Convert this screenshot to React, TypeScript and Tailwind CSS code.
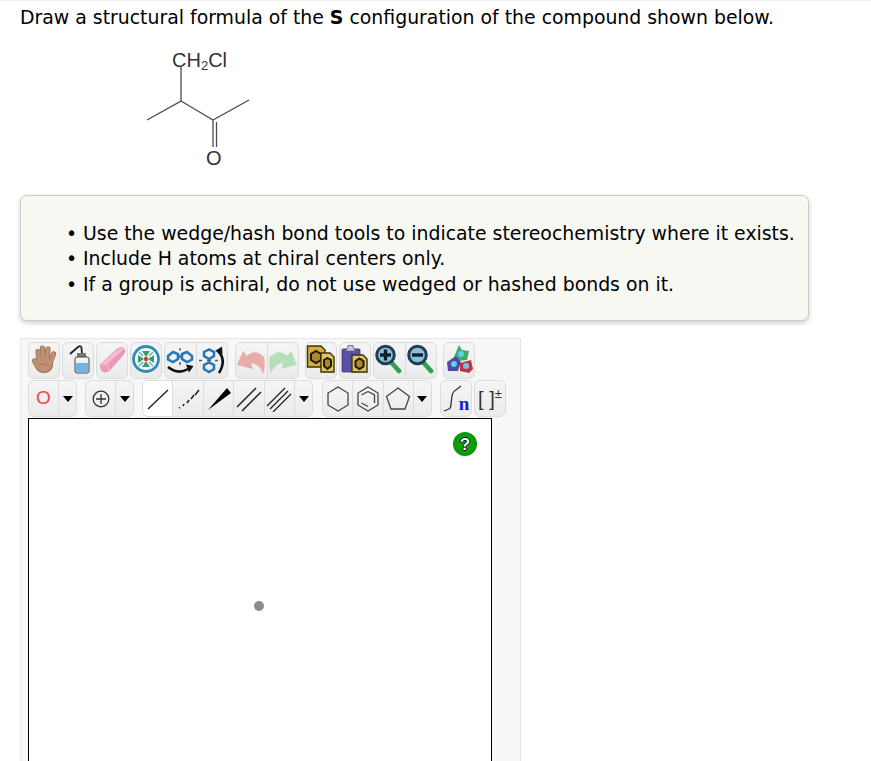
import React from 'react';

// every toolbar icon is drawn on the 30x35 inner face of a button
const Face = ({ children }: { children: React.ReactNode }) => (
  <svg width="30" height="35" viewBox="0 0 30 35" fill="none" className="blur-[0.35px] shrink-0">
    {children}
  </svg>
);

const Hand = () => (
  <Face>
    <g stroke="#8f6a52" strokeWidth="5.200" strokeLinecap="round">
      <path d="M10 18 L9 8.500 M14 16 L13.500 5 M18 16 L19 6 M21.500 19 L24.500 11 M9 24 L5.500 18" />
    </g>
    <ellipse cx="15" cy="22" rx="9" ry="8" fill="#8f6a52" />
    <g stroke="#c09070" strokeWidth="4" strokeLinecap="round">
      <path d="M10 18 L9 8.500 M14 16 L13.500 5 M18 16 L19 6 M21.500 19 L24.500 11 M9 24 L5.500 18" />
    </g>
    <ellipse cx="15" cy="22" rx="8" ry="7" fill="#c09070" />
    <path d="M10 22 Q15 19 20 24" stroke="#9c7258" strokeWidth="1" />
  </Face>
);

const Bottle = () => (
  <Face>
    <path d="M7 11 L15 4 Q18 2 18.500 5 L19 11" stroke="#222" strokeWidth="1.800" />
    <rect x="14" y="10" width="9" height="5" fill="#777777" />
    <rect x="12" y="14" width="14" height="16" rx="2" fill="#eef2f5" stroke="#444" strokeWidth="1" />
    <rect x="13" y="20" width="12" height="9.500" fill="#6fb6e4" />
  </Face>
);

const Eraser = () => (
  <Face>
    <path d="M3 22 L20 6 Q25 3 27.500 6 Q29 9 26 12 L12 28 Q7 30 5 28 Z" fill="#ee95bb" stroke="#d889ab" strokeWidth="0.600" />
    <path d="M4 21 L20 7 Q24 4 27 6 L10 21 L5 22 Z" fill="#f7b9d3" />
    <path d="M5 22 L10 21 L12 28" stroke="#f9c9dd" strokeWidth="0.900" />
  </Face>
);

const Wheel = () => (
  <Face>
    <circle cx="15" cy="16" r="12.500" fill="#f1f7fa" stroke="#2f8db5" strokeWidth="2.800" />
    <g fill="#3e9a62">
      <path d="M15 14 L11 8 L19 8 Z" />
      <path d="M15 18 L11 24 L19 24 Z" />
      <path d="M13 16 L7 12 L7 20 Z" />
      <path d="M17 16 L23 12 L23 20 Z" />
    </g>
    <path d="M8 9 L12 13 M22 9 L18 13 M8 23 L12 19 M22 23 L18 19" stroke="#52a8c8" strokeWidth="1.200" />
    <circle cx="15" cy="16" r="2.200" fill="#dc3a32" />
  </Face>
);

const FlipH = () => (
  <Face>
    <path d="M3 13 L8 9 L13 11 L13 16 L8 19 L3 16.500 Z" stroke="#1f78bd" strokeWidth="2.500" />
    <path d="M17 11 L22 9 L27 13 L27 16.500 L22 19 L17 16 Z" stroke="#1f78bd" strokeWidth="2.500" />
    <path d="M15 5 L15 7.500 M15 12 L15 15 M15 19 L15 22" stroke="#555" strokeWidth="1.400" />
    <path d="M3 24 Q13 32 23 26" stroke="#111" strokeWidth="2.600" />
    <path d="M21 21.500 L28.500 23 L24 29.500 Z" fill="#111" />
  </Face>
);

const FlipV = () => (
  <Face>
    <path d="M7 9 L12 6.500 L17 9 L17 13 L12 16 L7 13 Z" stroke="#1f78bd" strokeWidth="2.500" />
    <path d="M7 22 L12 19.500 L17 22 L17 26 L12 29 L7 26 Z" stroke="#1f78bd" strokeWidth="2.500" />
    <path d="M2 17.500 L5 17.500 M10 17.500 L14 17.500 M18 17.500 L21 17.500" stroke="#555" strokeWidth="1.400" />
    <path d="M21 8 Q30 17 22 30" stroke="#111" strokeWidth="2.600" />
    <path d="M18 8 L25 3.500 L25.500 11 Z" fill="#111" />
  </Face>
);

const Undo = () => (
  <Face>
    <path d="M1 22 L7 8 L11 13 Q19 5 28 14 Q30 22 27 31 Q24 21 15 20 L17 26 Z" fill="#e9acac" />
  </Face>
);

const Redo = () => (
  <Face>
    <path d="M29 22 L23 8 L19 13 Q11 5 2 14 Q0 22 3 31 Q6 21 15 20 L13 26 Z" fill="#b3e0b9" />
  </Face>
);

const Copy = () => (
  <Face>
    <path d="M1.500 3 L15 3 L19 7 L19 24 L1.500 24 Z" fill="#d3ae3c" stroke="#3a3010" strokeWidth="1.400" />
    <path d="M10 8 L15 11 L15 17 L10 20 L5 17 L5 11 Z" fill="#a98a2c" stroke="#1c1a10" strokeWidth="2" />
    <path d="M15 10 L24 10 L28 14 L28 29 L15 29 Z" fill="#e2c45a" stroke="#3a3010" strokeWidth="1.400" />
    <path d="M21.500 15 L25 17 L25 23 L21.500 26 L18 23 L18 17 Z" fill="#a98a2c" stroke="#1c1a10" strokeWidth="2" />
  </Face>
);

const Paste = () => (
  <Face>
    <rect x="2" y="6" width="18" height="23" rx="1" fill="#5a50a3" stroke="#3d3670" strokeWidth="0.800" />
    <path d="M7 6 L8 2.500 L13 2.500 L14 6 L16 8 L5 8 Z" fill="#c9c7df" stroke="#5a5a72" strokeWidth="0.800" />
    <path d="M12 12 L23 12 L27 16 L27 29 L12 29 Z" fill="#e2c45a" stroke="#3a3010" strokeWidth="1.400" />
    <path d="M19.500 15.500 L23.500 18 L23.500 23.500 L19.500 26 L15.500 23.500 L15.500 18 Z" fill="#a98a2c" stroke="#1c1a10" strokeWidth="2" />
  </Face>
);

const Zoom = ({ plus }: { plus?: boolean }) => (
  <Face>
    <path d="M17 19 L25 28" stroke="#2fa24f" strokeWidth="4.800" strokeLinecap="round" />
    <circle cx="11.500" cy="12" r="8.800" fill="#8fbcd6" stroke="#1d4058" strokeWidth="3" />
    <path d="M6 12 L17 12" stroke="#0f2130" strokeWidth="3.400" />
    {plus && <path d="M11.500 6.500 L11.500 17.500" stroke="#0f2130" strokeWidth="3.400" />}
  </Face>
);

const Colors = () => (
  <Face>
    <path d="M10 14 L15 2 L18 7 L25 8 L23 17 L14 18 Z" fill="#45a868" />
    <path d="M3 19 L12 13 L17 19 L14 28 L4 28 Z" fill="#4e4aa5" />
    <path d="M16 20 L27 17 L29 26 L25 30 L16 28 Z" fill="#c9303f" />
    <circle cx="17" cy="11" r="3" fill="#5ccfe6" />
    <circle cx="10" cy="21" r="3" fill="#5ccfe6" />
    <circle cx="22" cy="23" r="3" fill="#5ccfe6" />
  </Face>
);

const Caret = () => <span className="w-0 h-0 border-x-[5px] border-x-transparent border-t-[6px] border-t-black" />;

const Bond = ({ kind }: { kind: string }) => (
  <svg width="26" height="26" viewBox="0 0 26 26" stroke="#222" fill="none">
    {kind === 'single' && <path d="M3 23 L23 4" strokeWidth="1.400" />}
    {kind === 'hash' && <path d="M4 22 L5 21.500 M8 20 L9 18 M12 17 L14 14 M16 13 L19 9 M20 9 L24 4" strokeWidth="1.600" />}
    {kind === 'wedge' && <path d="M2 24 L21 2 L25 7 Z" fill="#000" stroke="none" />}
    {kind === 'double' && <path d="M1 21 L20 2 M6 25 L25 6" strokeWidth="1.500" />}
    {kind === 'triple' && <path d="M1 20 L19 2 M4 23 L22 5 M7 26 L25 8" strokeWidth="1.300" />}
  </svg>
);

const Hexagon = ({ inner }: { inner?: boolean }) => (
  <svg width="24" height="28" viewBox="0 0 24 28" stroke="#444" fill="none" strokeWidth="1.300">
    <path d="M12 2 L22 8 L22 20 L12 26 L2 20 L2 8 Z" />
    {inner && <path d="M12 6.500 L18.500 10 L18.500 18 M12 21.500 L5.500 18 M5.500 10 L12 6.500" />}
  </svg>
);

const Pentagon = () => (
  <svg width="26" height="26" viewBox="0 0 26 26" stroke="#444" fill="none" strokeWidth="1.300">
    <path d="M13 2 L24.500 10.500 L20 23 L6 23 L1.500 10.500 Z" />
  </svg>
);

const Sgroup = () => (
  <div className="flex items-end">
    <svg width="19" height="27" viewBox="0 0 19 27" stroke="#333" fill="none" strokeWidth="1.300">
      <path d="M1 26 L6 24 Q8 23 8 19 L9 11 Q10 6 13 5 L18 1" />
    </svg>
    <span className="-ml-[3px] text-[19px] leading-[17px] font-bold text-[#1a1ad6] font-['Liberation_Serif',serif]">n</span>
  </div>
);

const Btn = ({ fixed, active, children }: { fixed?: boolean; active?: boolean; children?: React.ReactNode }) => (
  <div className={`${fixed ? 'w-[17px] shrink-0' : 'flex-1 min-w-0'} h-full flex items-center justify-center border-r border-[#dddddd] last:border-r-0 ${active ? 'bg-white rounded-l-[5px]' : ''}`}>
    {children}
  </div>
);

const Group = ({ className = '', children }: { className?: string; children: React.ReactNode }) => (
  <div className={`h-[37px] flex shrink-0 rounded-[6px] border border-[#dcdcdc] bg-gradient-to-b from-[#f5f5f5] to-[#ebebeb] overflow-hidden ${className}`}>
    {children}
  </div>
);

export default function App() {
  return (
    <div className="h-[761px] overflow-hidden bg-white text-black font-['DejaVu_Sans',sans-serif]">
      <div className="h-px bg-[#eeeeee]" />
      <p className="pl-5 pt-[5px] text-[18.880px] leading-[22px] whitespace-nowrap">
        Draw a structural formula of the <b>S</b> configuration of the compound shown below.
      </p>

      <div className="mt-[19px] ml-[144px] w-[110px] h-[125px] relative">
        <svg width="110" height="125" viewBox="0 0 110 125" fill="none" stroke="#4d4d4d" strokeWidth="1.300">
          <path d="M37 20 L37 54 L3 73" />
          <path d="M37 54 L69 73 L105 53" />
          <path d="M69 73 L69 100 M72.500 75 L72.500 100" />
        </svg>
        <span className="absolute left-[28px] top-[2px] text-[20px] leading-[22px] text-[#333333] font-['Liberation_Sans',sans-serif] whitespace-nowrap">
          CH<sub className="text-[13px]">2</sub>Cl
        </span>
        <span className="absolute left-[62px] top-[100px] text-[20px] leading-[22px] text-[#333333] font-['Liberation_Sans',sans-serif]">O</span>
      </div>

      <div className="mt-[23px] ml-5 w-[789px] h-[126px] rounded-[7px] border border-[#cccccc] bg-[#f8f8f3] shadow-[0_2px_5px_rgba(0,0,0,0.2)] flex items-center">
        <ul className="pl-[45px] pt-[2px] text-[18.880px] leading-[25.500px] whitespace-nowrap">
          {[
            'Use the wedge/hash bond tools to indicate stereochemistry where it exists.',
            'Include H atoms at chiral centers only.',
            'If a group is achiral, do not use wedged or hashed bonds on it.',
          ].map((line) => (
            <li key={line} className="flex">
              <span className="w-[17px] shrink-0">•</span>
              <span>{line}</span>
            </li>
          ))}
        </ul>
      </div>

      <div className="mt-[17px] ml-5 w-[501px] h-[500px] bg-[#f7f7f7] border border-[#e6e6e6] pt-[3px] pl-[7px]">
        <div className="flex">
          <Group className="w-[32px]"><Btn><Hand /></Btn></Group>
          <Group className="w-[32px] ml-[2px]"><Btn><Bottle /></Btn></Group>
          <Group className="w-[32px] ml-[2px]"><Btn><Eraser /></Btn></Group>
          <Group className="w-[32px] ml-[2px]"><Btn><Wheel /></Btn></Group>
          <Group className="w-[64px] ml-[2px]"><Btn><FlipH /></Btn><Btn><FlipV /></Btn></Group>
          <Group className="w-[64px] ml-[7px]"><Btn><Undo /></Btn><Btn><Redo /></Btn></Group>
          <Group className="w-[32px] ml-[6px]"><Btn><Copy /></Btn></Group>
          <Group className="w-[32px] ml-[2px]"><Btn><Paste /></Btn></Group>
          <Group className="w-[64px] ml-[2px]"><Btn><Zoom plus /></Btn><Btn><Zoom /></Btn></Group>
          <Group className="w-[32px] ml-[6px]"><Btn><Colors /></Btn></Group>
        </div>
        <div className="flex mt-px">
          <Group className="w-[49px]">
            <Btn><span className="text-[19px] text-[#f44444] font-['Liberation_Sans',sans-serif]">O</span></Btn>
            <Btn fixed><Caret /></Btn>
          </Group>
          <Group className="w-[49px] ml-[8px]">
            <Btn>
              <svg width="18" height="18" viewBox="0 0 18 18" stroke="#333" fill="none" strokeWidth="1.300">
                <circle cx="9" cy="9" r="7.800" />
                <path d="M4 9 L14 9 M9 4 L9 14" />
              </svg>
            </Btn>
            <Btn fixed><Caret /></Btn>
          </Group>
          <Group className="w-[171px] ml-[8px]">
            <Btn active><Bond kind="single" /></Btn>
            <Btn><Bond kind="hash" /></Btn>
            <Btn><Bond kind="wedge" /></Btn>
            <Btn><Bond kind="double" /></Btn>
            <Btn><Bond kind="triple" /></Btn>
            <Btn fixed><Caret /></Btn>
          </Group>
          <Group className="w-[110px] ml-[9px]">
            <Btn><Hexagon /></Btn>
            <Btn><Hexagon inner /></Btn>
            <Btn><Pentagon /></Btn>
            <Btn fixed><Caret /></Btn>
          </Group>
          <Group className="w-[32px] ml-[8px]"><Btn><Sgroup /></Btn></Group>
          <Group className="w-[32px] ml-[2px]">
            <Btn>
              <div className="flex items-start text-[#333333] font-['Liberation_Sans',sans-serif]">
                <span className="text-[20px] leading-[24px] whitespace-pre">[ ]</span>
                <span className="text-[13px] leading-[14px]">±</span>
              </div>
            </Btn>
          </Group>
        </div>
        <div className="relative mt-px w-[464px] h-[400px] bg-white border border-black">
          <div className="absolute left-[424px] top-[13px] w-6 h-6 rounded-full bg-[radial-gradient(circle,#12b012,#008a00)] flex items-center justify-center text-[17px] font-bold leading-none font-['Liberation_Sans',sans-serif] text-white [text-shadow:1px_0_0_#000,-1px_0_0_#000,0_1px_0_#000,0_-1px_0_#000]">?</div>
          <div className="absolute left-[225px] top-[182px] w-[10px] h-[10px] rounded-full bg-[#8c8c8c]" />
        </div>
      </div>
    </div>
  );
}
